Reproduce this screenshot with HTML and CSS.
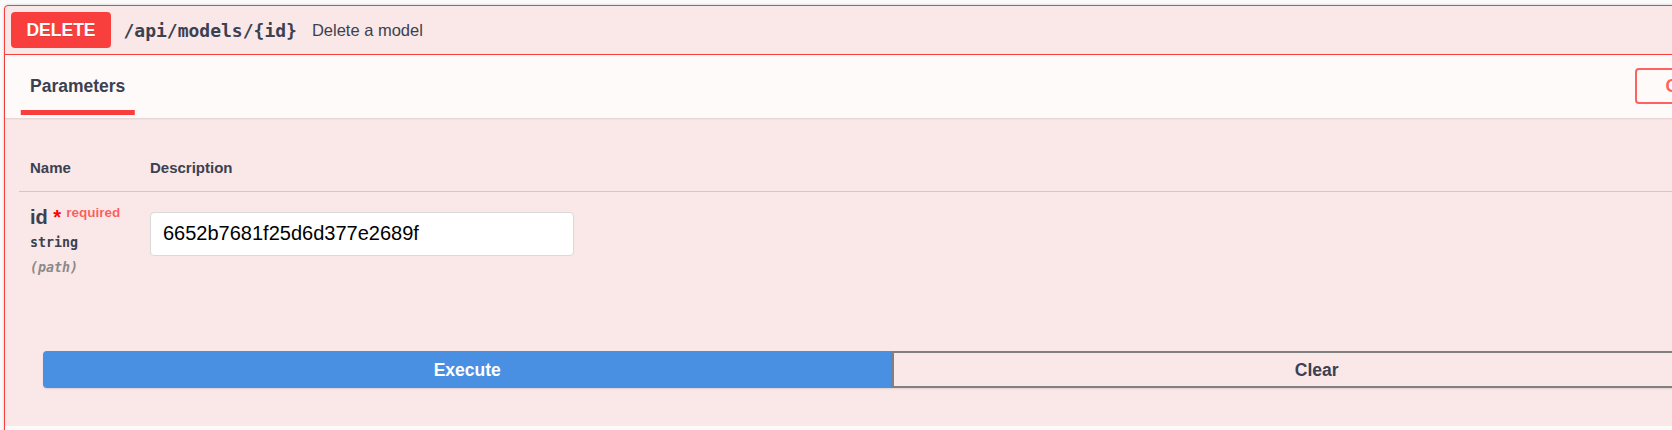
FILE: index.html
```html
<!DOCTYPE html>
<html lang="en">
<head>
<meta charset="utf-8">
<title>DELETE /api/models/{id}</title>
<link rel="stylesheet" href="styles.css">
</head>
<body>
<div class="opblock">
  <div class="summary">
    <span class="method">DELETE</span>
    <span class="path">/api/models/{id}</span>
    <span class="summary-desc">Delete a model</span>
  </div>
  <div class="section-header">
    <h4 class="tab-item"><span class="tab-label">Parameters</span></h4>
    <button class="btn-cancel">Cancel</button>
  </div>
  <div class="params">
    <div class="params-head">
      <div class="col-name">Name</div>
      <div class="col-desc">Description</div>
    </div>
    <div class="param-row">
      <div class="col-name">
        <div class="param-name">id<span class="star">&nbsp;*</span><span class="req">required</span></div>
        <div class="param-type">string</div>
        <div class="param-in">(path)</div>
      </div>
      <div class="col-desc">
        <input class="param-input" type="text" value="6652b7681f25d6d377e2689f">
      </div>
    </div>
  </div>
  <div class="btn-group">
    <button class="btn btn-execute">Execute</button>
    <button class="btn btn-clear">Clear</button>
  </div>
  <div class="responses-header"></div>
</div>
</body>
</html>
```
FILE: styles.css
```css
html, body {
  margin: 0;
  padding: 0;
}
body {
  background: #fafafa;
  overflow: hidden;
  font-family: "Liberation Sans", Arial, sans-serif;
  color: #3b4151;
}
.opblock {
  margin: 5px 0 0 4px;
  width: 1776px;
  box-sizing: border-box;
  border: 1px solid #f93e3e;
  border-radius: 4px;
  background: rgb(250, 231, 231);
  box-shadow: 0 0 3px rgba(0, 0, 0, .19);
}
.summary {
  display: flex;
  align-items: center;
  padding: 6px;
  border-bottom: 1px solid #f93e3e;
}
.method {
  display: flex;
  align-items: center;
  justify-content: center;
  min-width: 100px;
  height: 36px;
  background: #f93e3e;
  color: #fff;
  font-weight: 700;
  font-size: 17.5px;
  border-radius: 4px;
  text-shadow: 0 1px 0 rgba(0, 0, 0, .1);
}
.path {
  padding: 0 15px 0 12.5px;
  font-family: "DejaVu Sans Mono", "Liberation Mono", monospace;
  font-weight: 700;
  font-size: 18px;
  color: #3b4151;
}
.summary-desc {
  font-size: 16.5px;
  color: #3b4151;
}
.section-header {
  display: flex;
  align-items: center;
  min-height: 62.5px;
  box-sizing: border-box;
  padding: 10px 25px;
  background: rgba(255, 255, 255, .8);
  box-shadow: 0 1px 2px rgba(0, 0, 0, .1);
  position: relative;
}
.tab-item {
  margin: 0;
  font-size: 17.5px;
  font-weight: 700;
  line-height: 20px;
  color: #3b4151;
}
.tab-label {
  position: relative;
}
.tab-label::after {
  content: "";
  position: absolute;
  bottom: -18.75px;
  left: 50%;
  width: 120%;
  height: 5px;
  transform: translateX(-50%);
  background: #f93e3e;
}
.btn-cancel {
  margin-left: auto;
  border: 2px solid #ff6060;
  border-radius: 4px;
  background: transparent;
  color: #ff6060;
  font-family: "Liberation Sans", Arial, sans-serif;
  font-weight: 700;
  font-size: 17.5px;
  line-height: 20px;
  padding: 6px 29px;
}
.params {
  padding: 26px 0 25.5px 14px;
}
.params-head {
  display: flex;
  padding: 15px 0 15px 11px;
  border-bottom: 1px solid rgba(59, 65, 81, .2);
  font-size: 15px;
  font-weight: 700;
  line-height: 17px;
  color: #3b4151;
}
.col-name {
  width: 120px;
  flex: none;
}
.param-row {
  display: flex;
  padding: 14px 0 12.5px 11px;
}
.param-name {
  font-size: 20px;
  font-weight: 700;
  line-height: 23px;
  color: #3b4151;
  white-space: nowrap;
}
.star {
  color: red;
}
.req {
  color: rgba(255, 0, 0, .6);
  font-size: 13.5px;
  font-weight: 700;
  padding: 6px 5px;
  position: relative;
  top: -7px;
}
.param-type {
  font-family: "DejaVu Sans Mono", "Liberation Mono", monospace;
  font-size: 13.3px;
  font-weight: 700;
  line-height: 17px;
  padding: 3px 0 6.25px;
  color: #3b4151;
}
.param-in {
  margin-top: 2px;
  font-family: "DejaVu Sans Mono", "Liberation Mono", monospace;
  font-size: 13.3px;
  font-style: italic;
  font-weight: 700;
  line-height: 17px;
  color: #8a8a8a;
}
.param-input {
  display: block;
  margin: 6.25px 0;
  width: 424px;
  height: 44px;
  box-sizing: border-box;
  padding: 0 12px;
  border: 1px solid #d9d9d9;
  border-radius: 4px;
  background: #fff;
  font-family: "Liberation Sans", Arial, sans-serif;
  font-size: 20px;
  color: #000;
  outline: none;
}
.btn-group {
  display: flex;
  padding: 37.5px;
}
.btn {
  flex: 1;
  font-family: "Liberation Sans", Arial, sans-serif;
  font-weight: 700;
  font-size: 17.5px;
  line-height: 20px;
  padding: 6.5px 29px;
  border: 2px solid gray;
  box-shadow: 0 1px 2px rgba(0, 0, 0, .1);
  background: transparent;
  color: #3b4151;
}
.btn-execute {
  background: #4990e2;
  border-color: #4990e2;
  color: #fff;
  border-radius: 4px 0 0 4px;
}
.btn-clear {
  border-radius: 0 4px 4px 0;
}
.responses-header {
  height: 40px;
  background: rgba(255, 255, 255, .8);
}
```
